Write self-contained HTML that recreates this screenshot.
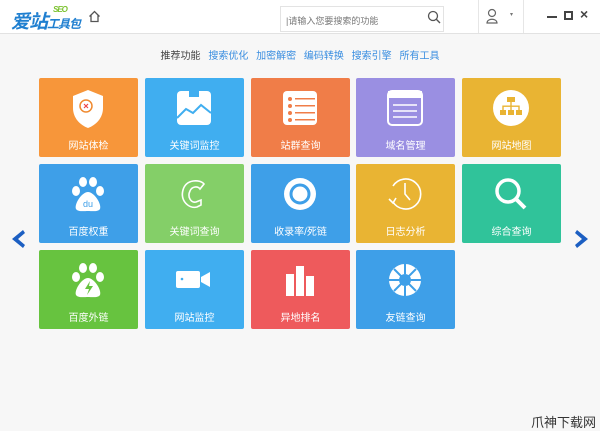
<!DOCTYPE html>
<html><head><meta charset="utf-8"><style>
*{margin:0;padding:0;box-sizing:border-box}
body{width:600px;height:430px;background:#f7f7f7;font-family:"Liberation Sans","Noto Sans CJK SC",sans-serif;position:relative;overflow:hidden}
.hdr{position:absolute;left:0;top:0;width:600px;height:34px;background:#fff;border-bottom:1px solid #e2e2e2}
.logo{position:absolute;left:11px;top:7px;font-size:19px;font-weight:bold;color:#1f7fd0;font-style:italic;letter-spacing:-1px}
.logo small{font-size:12px;color:#1f7fd0}
.logo sup{font-size:8px;color:#7cc230;position:absolute;left:42px;top:-2px}
.search{position:absolute;left:280px;top:6px;width:164px;height:26px;border:1px solid #e3e3e3;background:#fff;font-size:9px;color:#777;padding:7px 0 0 5px}
.nav{position:absolute;top:47px;left:0;width:600px;text-align:center;font-size:10px;color:#444}
.nav span{color:#3a8ee0;margin-left:5px}
.t{position:absolute;width:99px;height:79px;border-radius:2px;color:#fff;font-size:10px;text-align:center}
.t .l{position:absolute;left:0;right:0;top:59px}
.t svg{position:absolute;left:29px;top:10px}
</style></head><body>
<div class="hdr">
<div class="logo">爱站<small>工具包</small><sup>SEO</sup></div>
<svg style="position:absolute;left:88px;top:10px" width="13" height="13" viewBox="0 0 13 13"><path d="M1.5 6.5L6.5 1.5 11.5 6.5M3 5v6.5h7V5" fill="none" stroke="#555" stroke-width="1.3"/></svg>
<div class="search">|请输入您要搜索的功能</div>
<svg style="position:absolute;left:427px;top:10px" width="14" height="14" viewBox="0 0 14 14"><circle cx="6" cy="6" r="4.5" fill="none" stroke="#555" stroke-width="1.3"/><path d="M9.3 9.3L13 13" stroke="#555" stroke-width="1.4"/></svg>
<div style="position:absolute;left:478px;top:0;width:1px;height:33px;background:#e6e6e6"></div>
<div style="position:absolute;left:523px;top:0;width:1px;height:33px;background:#e6e6e6"></div>
<svg style="position:absolute;left:486px;top:8px" width="12" height="16" viewBox="0 0 12 16"><circle cx="6" cy="5" r="3.5" fill="none" stroke="#666" stroke-width="1.2"/><path d="M1 15c0-5 10-5 10 0z" fill="none" stroke="#666" stroke-width="1.2"/></svg>
<div style="position:absolute;left:510px;top:11px;font-size:6px;color:#777">▾</div>
<div style="position:absolute;left:547px;top:16px;width:10px;height:2px;background:#444"></div>
<div style="position:absolute;left:564px;top:11px;width:9px;height:9px;border:2px solid #444"></div>
<div style="position:absolute;left:580px;top:6px;font-size:14px;font-weight:bold;color:#444">×</div>
</div>
<div class="nav">推荐功能 <span>搜索优化</span> <span>加密解密</span> <span>编码转换</span> <span>搜索引擎</span> <span>所有工具</span></div>

<div class="t" style="left:39px;top:78px;background:#f7963a"><svg width="40" height="42" viewBox="0 0 40 42"><path d="M20 2l15 6v12c0 10-7 17-15 20C12 37 5 30 5 20V8z" fill="#fff"/><circle cx="18" cy="18" r="6" fill="none" stroke="#f08a30" stroke-width="1.5"/><path d="M16 16l4 4M20 16l-4 4" stroke="#e44" stroke-width="1.2"/></svg><div class="l">网站体检</div></div>
<div class="t" style="left:145px;top:78px;background:#40aef0"><svg width="40" height="40" viewBox="0 0 40 40"><rect x="3" y="3" width="34" height="34" rx="4" fill="#fff"/><path d="M3 30l9-9 7 4 8-8 10 8" fill="none" stroke="#40aef0" stroke-width="2"/><rect x="15" y="3" width="10" height="6" fill="#40aef0"/></svg><div class="l">关键词监控</div></div>
<div class="t" style="left:251px;top:78px;background:#f07d48"><svg width="40" height="40" viewBox="0 0 40 40"><rect x="3" y="3" width="34" height="34" rx="4" fill="#fff"/><g fill="#f07d48"><circle cx="10" cy="11" r="2"/><circle cx="10" cy="18" r="2"/><circle cx="10" cy="25" r="2"/><circle cx="10" cy="32" r="2"/><rect x="15" y="10" width="20" height="1.5"/><rect x="15" y="17" width="20" height="1.5"/><rect x="15" y="24" width="20" height="1.5"/><rect x="15" y="31" width="20" height="1.5"/></g></svg><div class="l">站群查询</div></div>
<div class="t" style="left:356px;top:78px;background:#9a8fe2"><svg width="40" height="40" viewBox="0 0 40 40"><rect x="3" y="3" width="34" height="34" rx="4" fill="none" stroke="#fff" stroke-width="2"/><rect x="3" y="3" width="34" height="7" fill="#fff"/><g stroke="#fff" stroke-width="1.5"><path d="M8 17h24M8 23h24M8 29h24"/></g></svg><div class="l">域名管理</div></div>
<div class="t" style="left:462px;top:78px;background:#e9b433"><svg width="40" height="40" viewBox="0 0 40 40"><circle cx="20" cy="20" r="18" fill="#fff"/><g fill="#e9b433"><rect x="16" y="9" width="8" height="5"/><rect x="9" y="22" width="6" height="5"/><rect x="17" y="22" width="6" height="5"/><rect x="25" y="22" width="6" height="5"/><path d="M19.3 14h1.4v8h-1.4zM12 17.5h16v1.4H12zM11.3 17.5h1.4V22h-1.4zM27.3 17.5h1.4V22h-1.4z"/></g></svg><div class="l">网站地图</div></div>

<div class="t" style="left:39px;top:164px;background:#3e9fe8"><svg width="40" height="40" viewBox="0 0 40 40" fill="#fff"><ellipse cx="8" cy="17" rx="4" ry="5"/><ellipse cx="15" cy="8" rx="4" ry="5"/><ellipse cx="25" cy="8" rx="4" ry="5"/><ellipse cx="32" cy="17" rx="4" ry="5"/><path d="M20 18c-6 0-14 12-12 17 2 3 8 2 12 2s10 1 12-2c2-5-6-17-12-17z"/><text x="20" y="33" font-size="9" fill="#3e9fe8" text-anchor="middle" font-family="Liberation Sans">du</text></svg><div class="l">百度权重</div></div>
<div class="t" style="left:145px;top:164px;background:#84cf68"><svg width="40" height="40" viewBox="0 0 40 40"><path d="M30 10C26 5 12 5 9 16c-3 11 6 19 14 17l4-2v-5l-5 2c-5 1-9-5-6-11 2-5 8-5 10-2z" fill="none" stroke="#fff" stroke-width="1.6"/></svg><div class="l">关键词查询</div></div>
<div class="t" style="left:251px;top:164px;background:#3e9fe8"><svg width="40" height="40" viewBox="0 0 40 40"><circle cx="20" cy="20" r="16" fill="#fff"/><circle cx="20" cy="20" r="9" fill="none" stroke="#3e9fe8" stroke-width="3"/></svg><div class="l">收录率/死链</div></div>
<div class="t" style="left:356px;top:164px;background:#e9b433"><svg width="40" height="40" viewBox="0 0 40 40"><path d="M8 28A15 15 0 1 0 8 12" fill="none" stroke="#fff" stroke-width="1.6"/><path d="M20 9v11l5 6" fill="none" stroke="#fff" stroke-width="1.6"/><path d="M4 25l4 4 3-5" fill="none" stroke="#fff" stroke-width="1.6"/></svg><div class="l">日志分析</div></div>
<div class="t" style="left:462px;top:164px;background:#30c39a"><svg width="40" height="40" viewBox="0 0 40 40"><circle cx="17" cy="17" r="11" fill="none" stroke="#fff" stroke-width="3.5"/><path d="M25 25l9 9" stroke="#fff" stroke-width="4"/></svg><div class="l">综合查询</div></div>

<div class="t" style="left:39px;top:250px;background:#67c33f"><svg width="40" height="40" viewBox="0 0 40 40" fill="#fff"><ellipse cx="8" cy="17" rx="4" ry="5"/><ellipse cx="15" cy="8" rx="4" ry="5"/><ellipse cx="25" cy="8" rx="4" ry="5"/><ellipse cx="32" cy="17" rx="4" ry="5"/><path d="M20 18c-6 0-14 12-12 17 2 3 8 2 12 2s10 1 12-2c2-5-6-17-12-17z"/><path d="M22 21l-5 8h4l-2 6 6-9h-4z" fill="#67c33f"/></svg><div class="l">百度外链</div></div>
<div class="t" style="left:145px;top:250px;background:#40aef0"><svg width="40" height="40" viewBox="0 0 40 40" fill="#fff"><rect x="2" y="11" width="24" height="17" rx="2"/><path d="M27 17l9-5v15l-9-5z"/><circle cx="8" cy="19" r="1.3" fill="#40aef0"/></svg><div class="l">网站监控</div></div>
<div class="t" style="left:251px;top:250px;background:#ee5a5c"><svg width="40" height="40" viewBox="0 0 40 40" fill="#fff"><rect x="6" y="14" width="8" height="22"/><rect x="16" y="6" width="8" height="30"/><rect x="26" y="16" width="8" height="20"/></svg><div class="l">异地排名</div></div>
<div class="t" style="left:356px;top:250px;background:#3e9fe8"><svg width="40" height="40" viewBox="0 0 40 40"><circle cx="20" cy="20" r="16" fill="#fff"/><circle cx="20" cy="20" r="6" fill="#3e9fe8"/><g stroke="#3e9fe8" stroke-width="2"><path d="M20 4v10M20 26v10M4 20h10M26 20h10M9 9l7 7M24 24l7 7M31 9l-7 7M16 24l-7 7"/></g></svg><div class="l">友链查询</div></div>

<svg style="position:absolute;left:9px;top:229px" width="18" height="20" viewBox="0 0 18 20"><path d="M14 1L3 10l11 9 2-3-7-6 7-6z" fill="#1c5fc2"/></svg>
<svg style="position:absolute;left:573px;top:229px" width="18" height="20" viewBox="0 0 18 20"><path d="M4 1l11 9-11 9-2-3 7-6-7-6z" fill="#1c5fc2"/></svg>
<div style="position:absolute;left:531px;top:412px;font-size:13px;color:#333">爪神下载网</div>
</body></html>
